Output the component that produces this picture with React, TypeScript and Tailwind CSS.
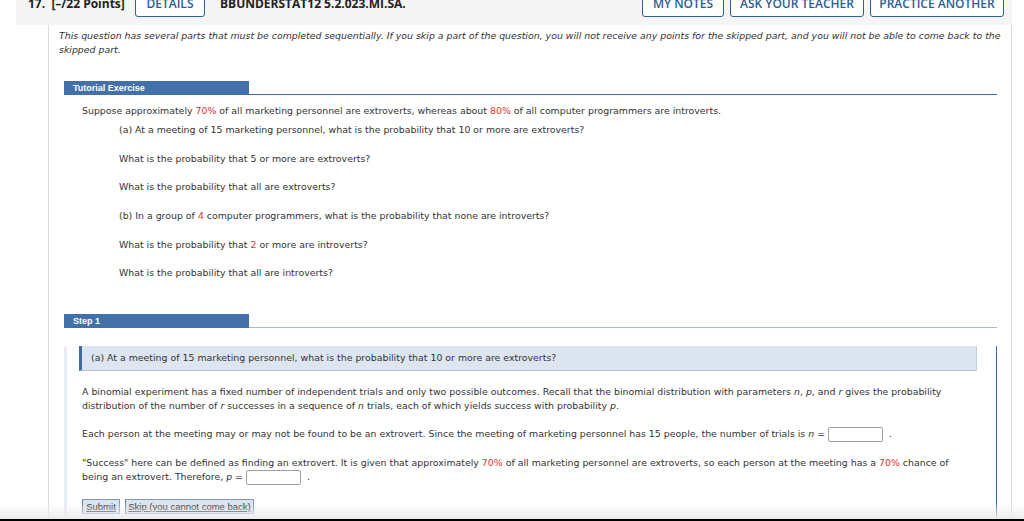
const Red = ({ children }: { children: React.ReactNode }) => (
  <span className="text-[#e3342f]">{children}</span>
);

const Blank = () => (
  <span className="mx-[3px] inline-block h-[15px] w-[55px] rounded-[2px] border border-[#a0a0a0] bg-white align-middle" />
);

function TabBar({ label, line }: { label: string; line: string }) {
  return (
    <div className="flex h-[14px]">
      <div className="flex w-[185px] items-center bg-[#4270a8] pl-[9px] font-['Liberation_Sans',Arial,sans-serif] text-[9px] font-bold text-white">
        {label}
      </div>
      <div className={`flex-1 border-b ${line}`} />
    </div>
  );
}

const headerBtn =
  "flex h-[26px] items-end justify-center rounded-[3px] border border-[#2e5f98] bg-white pb-[5px] text-[12px] font-semibold text-[#2a5d94]";

export default function App() {
  return (
    <div className="relative h-[521px] w-[1024px] overflow-hidden bg-white font-['DejaVu_Sans',Verdana,sans-serif] text-[9.4px] leading-[14px] text-[#333]">
      <div className="ml-4 w-[996px]">
        {/* Question header */}
        <div className="h-[25px] overflow-hidden bg-[#f5f5f5] font-['Open_Sans',sans-serif]">
          <div className="-mt-[9px] flex items-start">
            <div className="ml-[12px] mt-[6px] w-[107px] text-[12px] font-bold text-[#222]">17.&nbsp; [–/22 Points]</div>
            <div className={`${headerBtn} w-[70px]`}>DETAILS</div>
            <div className="ml-[15px] mt-[6px] text-[12px] font-bold text-[#222]">BBUNDERSTAT12 5.2.023.MI.SA.</div>
            <div className="ml-auto mr-[8px] flex gap-[6px]">
              <div className={`${headerBtn} w-[82px]`}>MY NOTES</div>
              <div className={`${headerBtn} w-[134px]`}>ASK YOUR TEACHER</div>
              <div className={`${headerBtn} w-[134px]`}>PRACTICE ANOTHER</div>
            </div>
          </div>
        </div>

        {/* Question body */}
        <div className="ml-8 h-[500px] border-x border-[#dcdcdc]">
          <p className="ml-[10px] mr-[5px] pt-[4px] italic">
            This question has several parts that must be completed sequentially. If you skip a part of the question, you
            will not receive any points for the skipped part, and you will not be able to come back to the skipped part.
          </p>

          <div className="ml-[15px] mr-[14px] mt-[24px]">
            <TabBar label="Tutorial Exercise" line="border-[#4270a8]" />
            <p className="mt-[9px] pl-[18px]">
              Suppose approximately <Red>70%</Red> of all marketing personnel are extroverts, whereas about <Red>80%</Red>{" "}
              of all computer programmers are introverts.
            </p>
            <div className="pl-[55px]">
              <p className="mt-[5px]">(a) At a meeting of 15 marketing personnel, what is the probability that 10 or more are extroverts?</p>
              <p className="mt-[15px]">What is the probability that 5 or more are extroverts?</p>
              <p className="mt-[14px]">What is the probability that all are extroverts?</p>
              <p className="mt-[15px]">
                (b) In a group of <Red>4</Red> computer programmers, what is the probability that none are introverts?
              </p>
              <p className="mt-[15px]">
                What is the probability that <Red>2</Red> or more are introverts?
              </p>
              <p className="mt-[14px]">What is the probability that all are introverts?</p>
            </div>

            <div className="mt-[34px]">
              <TabBar label="Step 1" line="border-[#a3bad8]" />
              <div className="h-[200px] border-l-[3px] border-r border-l-[#e8edf4] border-r-[#3f6ca4]">
                <div className="ml-[12px] mr-[19px] mt-[18px] flex h-[25px] items-center border-b border-l-[3px] border-r border-b-[#b3c4d9] border-l-[#3f6ca4] border-r-[#c3d0e0] bg-[#dde6f0] pl-[9px]">
                  (a) At a meeting of 15 marketing personnel, what is the probability that 10 or more are extroverts?
                </div>
                <div className="pl-[15px] pr-[22px]">
                  <p className="mt-[14px]">
                    A binomial experiment has a fixed number of independent trials and only two possible outcomes. Recall that
                    the binomial distribution with parameters <i>n</i>, <i>p</i>, and <i>r</i> gives the probability
                    distribution of the number of <i>r</i> successes in a sequence of <i>n</i> trials, each of which yields
                    success with probability <i>p</i>.
                  </p>
                  <p className="mt-[14px]">
                    Each person at the meeting may or may not be found to be an extrovert. Since the meeting of marketing
                    personnel has 15 people, the number of trials is <i>n</i> =<Blank /> .
                  </p>
                  <p className="mt-[14px]">
                    "Success" here can be defined as finding an extrovert. It is given that approximately <Red>70%</Red> of
                    all marketing personnel are extroverts, so each person at the meeting has a <Red>70%</Red> chance of
                    being an extrovert. Therefore, <i>p</i> =<Blank /> .
                  </p>
                  <div className="mt-[14px] flex gap-[5px] font-['Liberation_Sans',Arial,sans-serif] text-[9.5px] text-[#222]">
                    <span className="flex h-[15px] w-[38px] items-center justify-center border border-[#7f9ab9] border-l-[#5f7fa6] bg-[#dbe3ed] underline">
                      Submit
                    </span>
                    <span className="flex h-[15px] w-[129px] items-center justify-center border border-[#7f9ab9] border-l-[#5f7fa6] bg-[#dbe3ed] underline">
                      Skip (you cannot come back)
                    </span>
                  </div>
                </div>
              </div>
            </div>
          </div>
        </div>
      </div>

      {/* window bottom edge */}
      <div className="pointer-events-none absolute inset-x-0 bottom-[2px] h-[16px] bg-gradient-to-b from-transparent to-[#ececec]" />
      <div className="absolute inset-x-0 bottom-0 h-[2px] bg-black" />
    </div>
  );
}
